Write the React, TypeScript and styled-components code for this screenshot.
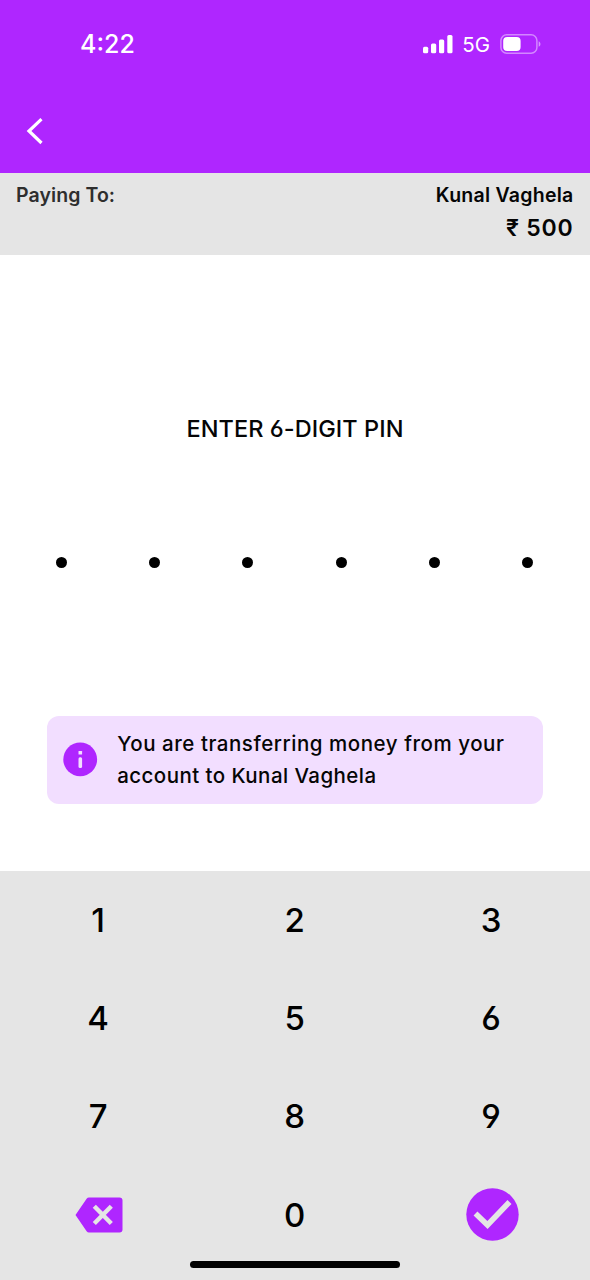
import React from "react";
import styled, { createGlobalStyle } from "styled-components";

const purple = "#af26ff";
const grey = "#e5e5e5";

const GlobalStyle = createGlobalStyle`
  body { margin: 0; background: #fff; }
  * { box-sizing: border-box; }
`;

const Screen = styled.div`
  position: relative;
  display: flex;
  flex-direction: column;
  width: 590px;
  height: 1280px;
  overflow: hidden;
  color: #050505;
  font-family: Inter, "Liberation Sans", sans-serif;
  font-weight: 500;
  font-feature-settings: "cv03", "cv04";
`;

const Header = styled.header`
  display: flex;
  flex-direction: column;
  height: 173px;
  background: ${purple};
  color: #fff;
`;

const StatusBar = styled.div`
  display: flex;
  align-items: center;
  justify-content: space-between;
  height: 88px;
  padding: 0 48px 0 80px;
`;

const Clock = styled.span`
  font-size: 25px;
  letter-spacing: 0px;
`;

const StatusIcons = styled.div`
  display: flex;
  align-items: center;
`;

const Network = styled.span`
  margin: 0 10px 0 9px;
  font-size: 20.5px;
  font-weight: 400;
  letter-spacing: 0px;
`;

const BackButton = styled.button`
  display: flex;
  width: 30px;
  margin: 28px 0 0 20px;
  padding: 0;
  border: 0;
  background: none;
`;

const Payee = styled.section`
  display: flex;
  justify-content: space-between;
  height: 81.5px;
  padding: 9px 16.5px 0 16px;
  background: ${grey};
`;

const PayeeLabel = styled.span`
  color: #2e2e2e;
  font-size: 19.5px;
  font-weight: 600;
  line-height: 26px;
  letter-spacing: 0.08px;
`;

const PayeeDetails = styled.div`
  display: flex;
  flex-direction: column;
  align-items: flex-end;
`;

const PayeeName = styled.span`
  font-size: 19.5px;
  font-weight: 600;
  line-height: 26px;
  letter-spacing: 0.25px;
`;

const Amount = styled.span`
  margin-top: 6px;
  font-size: 23px;
  font-weight: 600;
  line-height: 29px;
  letter-spacing: 0.8px;
`;

const Main = styled.main`
  display: flex;
  flex-direction: column;
  align-items: center;
  height: 616px;
`;

const Title = styled.h1`
  margin: 159.5px 0 0;
  font-size: 23.5px;
  font-weight: 450;
  line-height: 30px;
  letter-spacing: 0.07px;
`;

const PinDots = styled.div`
  display: flex;
  justify-content: space-between;
  width: 477px;
  margin: 113px 1px 0 0;
`;

const Dot = styled.span`
  width: 11px;
  height: 11px;
  border-radius: 50%;
  background: #000;
`;

const Notice = styled.div`
  display: flex;
  align-items: center;
  width: 495.5px;
  height: 88.5px;
  margin-top: 147.5px;
  padding-left: 16px;
  border-radius: 12px;
  background: #f2deff;
`;

const NoticeText = styled.p`
  margin: 0 0 0 19px;
  font-size: 20.5px;
  font-weight: 500;
  line-height: 31.5px;
  white-space: nowrap;
`;

const NoticeLine = styled.span<{ $spacing: number }>`
  display: block;
  letter-spacing: ${(p) => p.$spacing}px;
`;

const Keypad = styled.div`
  display: grid;
  grid-template-columns: repeat(3, 196.4px);
  grid-auto-rows: 98.3px;
  flex: 1;
  background: ${grey};
`;

const Key = styled.button`
  display: flex;
  align-items: center;
  justify-content: center;
  padding: 0;
  border: 0;
  background: none;
  color: #000;
  font: inherit;
  font-size: 33px;
  font-feature-settings: "cv03", "cv04";
`;

const HomeIndicator = styled.div`
  position: absolute;
  bottom: 12px;
  left: 190px;
  width: 210px;
  height: 7px;
  border-radius: 4px;
  background: #000;
`;

const SignalIcon = () => (
  <svg width="30" height="20" viewBox="0 0 30 20" fill="#fff">
    <rect x="0" y="12.7" width="5.2" height="6.6" rx="1.5" />
    <rect x="8" y="9.5" width="5.2" height="9.8" rx="1.5" />
    <rect x="16" y="5.5" width="5.2" height="13.8" rx="1.5" />
    <rect x="24.3" y="1" width="5.2" height="18.3" rx="1.5" />
  </svg>
);

const BatteryIcon = () => (
  <svg width="42" height="22" viewBox="0 0 42 22" fill="none">
    <rect x="0.9" y="1.8" width="36" height="18.4" rx="5.8" stroke="#fff" strokeOpacity=".45" strokeWidth="1.5" />
    <rect x="3.2" y="4" width="17.4" height="14" rx="4" fill="#fff" />
    <path d="M38.7 8.2c2.3 1 2.3 4.6 0 5.6z" fill="#fff" fillOpacity=".5" />
  </svg>
);

const BackIcon = () => (
  <svg width="30" height="30" viewBox="0 0 30 30" fill="none">
    <path d="M21.5 3.2 9 15l12.5 12" stroke="#fff" strokeWidth="3.2" />
  </svg>
);

const InfoIcon = () => (
  <svg width="35" height="35" viewBox="0 0 35 35">
    <circle cx="17.2" cy="17.4" r="16.9" fill={purple} />
    <rect x="15.5" y="9" width="3.6" height="3.5" rx=".5" fill="#f2deff" />
    <rect x="15.5" y="15.3" width="3.6" height="10.8" rx="1.5" fill="#f2deff" />
  </svg>
);

const DeleteIcon = () => (
  <svg width="48" height="36" viewBox="0 0 48 36">
    <path d="M14 .5h30.5a3 3 0 0 1 3 3v29a3 3 0 0 1-3 3H14a3 3 0 0 1-2.4-1.2L.5 18 11.6 1.7A3 3 0 0 1 14 .5Z" fill={purple} />
    <path d="m19.3 9.3 17 17.2M36.3 9.3l-17 17.2" stroke={grey} strokeWidth="4.4" />
  </svg>
);

const ConfirmIcon = () => (
  <svg width="53" height="53" viewBox="0 0 53 53" fill="none">
    <circle cx="26.5" cy="26.5" r="26.2" fill={purple} />
    <path d="M9.5 25.5 21.5 37 43.5 14" stroke={grey} strokeWidth="5.6" />
  </svg>
);

const IconSlot = styled.span`
  display: flex;
  margin-left: 2.6px;
`;

export default function App() {
  return (
    <Screen>
      <GlobalStyle />
      <Header>
        <StatusBar>
          <Clock>4:22</Clock>
          <StatusIcons>
            <SignalIcon />
            <Network>5G</Network>
            <BatteryIcon />
          </StatusIcons>
        </StatusBar>
        <BackButton aria-label="Back">
          <BackIcon />
        </BackButton>
      </Header>
      <Payee>
        <PayeeLabel>Paying To:</PayeeLabel>
        <PayeeDetails>
          <PayeeName>Kunal Vaghela</PayeeName>
          <Amount>₹ 500</Amount>
        </PayeeDetails>
      </Payee>
      <Main>
        <Title>ENTER 6-DIGIT PIN</Title>
        <PinDots>
          {[0, 1, 2, 3, 4, 5].map((i) => (
            <Dot key={i} />
          ))}
        </PinDots>
        <Notice>
          <InfoIcon />
          <NoticeText>
            <NoticeLine $spacing={0.54}>You are transferring money from your</NoticeLine>
            <NoticeLine $spacing={0.44}>account to Kunal Vaghela</NoticeLine>
          </NoticeText>
        </Notice>
      </Main>
      <Keypad>
        {["1", "2", "3", "4", "5", "6", "7", "8", "9"].map((n) => (
          <Key key={n}>{n}</Key>
        ))}
        <Key aria-label="Delete">
          <IconSlot>
            <DeleteIcon />
          </IconSlot>
        </Key>
        <Key>0</Key>
        <Key aria-label="Confirm">
          <IconSlot>
            <ConfirmIcon />
          </IconSlot>
        </Key>
      </Keypad>
      <HomeIndicator />
    </Screen>
  );
}
